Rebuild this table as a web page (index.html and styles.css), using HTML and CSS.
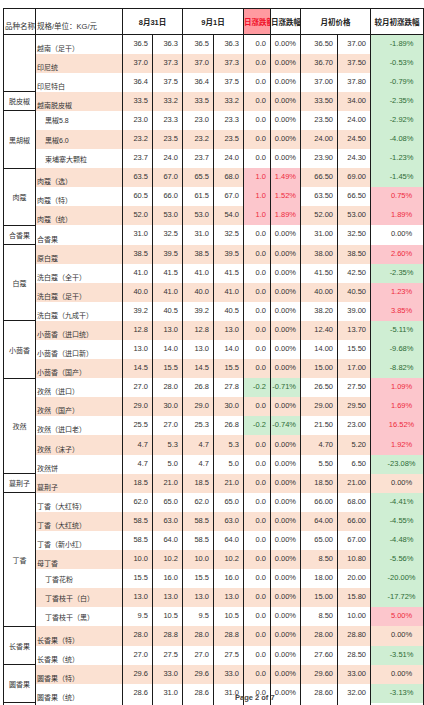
FILE: index.html
```html
<!DOCTYPE html>
<html lang="zh">
<head>
<meta charset="utf-8">
<title>价格表</title>
<link rel="stylesheet" href="styles.css">
</head>
<body>
<div class="page">
<table class="sheet">
<colgroup>
<col class="c1"><col class="c2"><col class="c3"><col class="c4"><col class="c5"><col class="c6"><col class="c7"><col class="c8"><col class="c9"><col class="c10"><col class="c11">
</colgroup>
<thead>
<tr>
<th class="hl">品种名称</th><th class="hl">规格/单位：KG/元</th><th colspan="2">8月31日</th><th colspan="2">9月1日</th><th class="hred">日涨跌额</th><th>日涨跌幅</th><th colspan="2">月初价格</th><th>较月初涨跌幅</th>
</tr>
</thead>
<tbody>
<tr><td class="g" rowspan="3"></td><td class="lab">越南（足干）</td><td>36.5</td><td>36.3</td><td>36.5</td><td>36.3</td><td>0.0</td><td>0.00%</td><td>36.50</td><td>37.00</td><td class="l up">-1.89%</td></tr>
<tr class="p"><td class="lab">印尼统</td><td>37.0</td><td>37.3</td><td>37.0</td><td>37.3</td><td>0.0</td><td>0.00%</td><td>36.70</td><td>37.50</td><td class="l up">-0.53%</td></tr>
<tr><td class="lab">印尼特白</td><td>36.4</td><td>37.5</td><td>36.4</td><td>37.5</td><td>0.0</td><td>0.00%</td><td>37.00</td><td>37.80</td><td class="l up">-0.79%</td></tr>

<tr class="p"><td class="g">脱皮椒</td><td class="lab">越南脱皮椒</td><td>33.5</td><td>33.2</td><td>33.5</td><td>33.2</td><td>0.0</td><td>0.00%</td><td>33.50</td><td>34.00</td><td class="l up">-2.35%</td></tr>

<tr><td class="g" rowspan="3">黑胡椒</td><td class="lab ind">黑椒5.8</td><td>23.0</td><td>23.3</td><td>23.0</td><td>23.3</td><td>0.0</td><td>0.00%</td><td>23.50</td><td>24.00</td><td class="l up">-2.92%</td></tr>
<tr class="p"><td class="lab ind">黑椒6.0</td><td>23.2</td><td>23.5</td><td>23.2</td><td>23.5</td><td>0.0</td><td>0.00%</td><td>24.00</td><td>24.50</td><td class="l up">-4.08%</td></tr>
<tr><td class="lab ind">柬埔寨大颗粒</td><td>23.7</td><td>24.0</td><td>23.7</td><td>24.0</td><td>0.0</td><td>0.00%</td><td>23.90</td><td>24.30</td><td class="l up">-1.23%</td></tr>

<tr class="p"><td class="g" rowspan="3">肉蔻</td><td class="lab">肉蔻（选）</td><td>63.5</td><td>67.0</td><td>65.5</td><td>68.0</td><td class="dn">1.0</td><td class="dn">1.49%</td><td>66.50</td><td>69.00</td><td class="l up">-1.45%</td></tr>
<tr><td class="lab">肉蔻（特）</td><td>60.5</td><td>66.0</td><td>61.5</td><td>67.0</td><td class="dn">1.0</td><td class="dn">1.52%</td><td>63.50</td><td>66.50</td><td class="l dn">0.75%</td></tr>
<tr class="p"><td class="lab">肉蔻（统）</td><td>52.0</td><td>53.0</td><td>53.0</td><td>54.0</td><td class="dn">1.0</td><td class="dn">1.89%</td><td>52.00</td><td>53.00</td><td class="l dn">1.89%</td></tr>

<tr><td class="g">合香果</td><td class="lab">合香果</td><td>31.0</td><td>32.5</td><td>31.0</td><td>32.5</td><td>0.0</td><td>0.00%</td><td>31.00</td><td>32.50</td><td class="l">0.00%</td></tr>

<tr class="p"><td class="g" rowspan="4">白蔻</td><td class="lab">原白蔻</td><td>38.5</td><td>39.5</td><td>38.5</td><td>39.5</td><td>0.0</td><td>0.00%</td><td>38.00</td><td>38.50</td><td class="l dn">2.60%</td></tr>
<tr><td class="lab">洗白蔻（全干）</td><td>41.0</td><td>41.5</td><td>41.0</td><td>41.5</td><td>0.0</td><td>0.00%</td><td>41.50</td><td>42.50</td><td class="l up">-2.35%</td></tr>
<tr class="p"><td class="lab">洗白蔻（足干）</td><td>40.0</td><td>41.0</td><td>40.0</td><td>41.0</td><td>0.0</td><td>0.00%</td><td>40.00</td><td>40.50</td><td class="l dn">1.23%</td></tr>
<tr><td class="lab">洗白蔻（九成干）</td><td>39.2</td><td>40.5</td><td>39.2</td><td>40.5</td><td>0.0</td><td>0.00%</td><td>38.20</td><td>39.00</td><td class="l dn">3.85%</td></tr>

<tr class="p"><td class="g" rowspan="3">小茴香</td><td class="lab">小茴香（进口统）</td><td>12.8</td><td>13.0</td><td>12.8</td><td>13.0</td><td>0.0</td><td>0.00%</td><td>12.40</td><td>13.70</td><td class="l up">-5.11%</td></tr>
<tr><td class="lab">小茴香（进口新）</td><td>13.0</td><td>14.0</td><td>13.0</td><td>14.0</td><td>0.0</td><td>0.00%</td><td>14.00</td><td>15.50</td><td class="l up">-9.68%</td></tr>
<tr class="p"><td class="lab">小茴香（国产）</td><td>14.5</td><td>15.5</td><td>14.5</td><td>15.5</td><td>0.0</td><td>0.00%</td><td>15.00</td><td>17.00</td><td class="l up">-8.82%</td></tr>

<tr><td class="g" rowspan="5">孜然</td><td class="lab">孜然（进口）</td><td>27.0</td><td>28.0</td><td>26.8</td><td>27.8</td><td class="up">-0.2</td><td class="up">-0.71%</td><td>26.50</td><td>27.50</td><td class="l dn">1.09%</td></tr>
<tr class="p"><td class="lab">孜然（国产）</td><td>29.0</td><td>30.0</td><td>29.0</td><td>30.0</td><td>0.0</td><td>0.00%</td><td>29.00</td><td>29.50</td><td class="l dn">1.69%</td></tr>
<tr><td class="lab">孜然（进口老）</td><td>25.5</td><td>27.0</td><td>25.3</td><td>26.8</td><td class="up">-0.2</td><td class="up">-0.74%</td><td>21.50</td><td>23.00</td><td class="l dn">16.52%</td></tr>
<tr class="p"><td class="lab">孜然（沫子）</td><td>4.7</td><td>5.3</td><td>4.7</td><td>5.3</td><td>0.0</td><td>0.00%</td><td>4.70</td><td>5.20</td><td class="l dn">1.92%</td></tr>
<tr><td class="lab">孜然饼</td><td>4.7</td><td>5.0</td><td>4.7</td><td>5.0</td><td>0.0</td><td>0.00%</td><td>5.50</td><td>6.50</td><td class="l up">-23.08%</td></tr>

<tr class="p"><td class="g">蔓荆子</td><td class="lab">蔓荆子</td><td>18.5</td><td>21.0</td><td>18.5</td><td>21.0</td><td>0.0</td><td>0.00%</td><td>18.50</td><td>21.00</td><td class="l">0.00%</td></tr>

<tr><td class="g" rowspan="7">丁香</td><td class="lab">丁香（大红特）</td><td>62.0</td><td>65.0</td><td>62.0</td><td>65.0</td><td>0.0</td><td>0.00%</td><td>66.00</td><td>68.00</td><td class="l up">-4.41%</td></tr>
<tr class="p"><td class="lab">丁香（大红统）</td><td>58.5</td><td>63.0</td><td>58.5</td><td>63.0</td><td>0.0</td><td>0.00%</td><td>64.00</td><td>66.00</td><td class="l up">-4.55%</td></tr>
<tr><td class="lab">丁香（新小红）</td><td>58.5</td><td>64.0</td><td>58.5</td><td>64.0</td><td>0.0</td><td>0.00%</td><td>65.00</td><td>67.00</td><td class="l up">-4.48%</td></tr>
<tr class="p"><td class="lab">母丁香</td><td>10.0</td><td>10.2</td><td>10.0</td><td>10.2</td><td>0.0</td><td>0.00%</td><td>8.50</td><td>10.80</td><td class="l up">-5.56%</td></tr>
<tr><td class="lab ind">丁香花粉</td><td>15.5</td><td>16.0</td><td>15.5</td><td>16.0</td><td>0.0</td><td>0.00%</td><td>18.00</td><td>20.00</td><td class="l up">-20.00%</td></tr>
<tr class="p"><td class="lab ind">丁香枝干（白）</td><td>13.0</td><td>13.0</td><td>13.0</td><td>13.0</td><td>0.0</td><td>0.00%</td><td>15.00</td><td>15.80</td><td class="l up">-17.72%</td></tr>
<tr><td class="lab ind">丁香枝干（黑）</td><td>9.5</td><td>10.5</td><td>9.5</td><td>10.5</td><td>0.0</td><td>0.00%</td><td>8.50</td><td>10.00</td><td class="l dn">5.00%</td></tr>

<tr class="p"><td class="g" rowspan="2">长香果</td><td class="lab">长香果（特）</td><td>28.0</td><td>28.8</td><td>28.0</td><td>28.8</td><td>0.0</td><td>0.00%</td><td>28.00</td><td>28.80</td><td class="l">0.00%</td></tr>
<tr><td class="lab">长香果（统）</td><td>27.0</td><td>27.5</td><td>27.0</td><td>27.5</td><td>0.0</td><td>0.00%</td><td>27.60</td><td>28.50</td><td class="l up">-3.51%</td></tr>

<tr class="p"><td class="g" rowspan="2">圆香果</td><td class="lab">圆香果（特）</td><td>29.6</td><td>33.0</td><td>29.6</td><td>33.0</td><td>0.0</td><td>0.00%</td><td>29.60</td><td>33.00</td><td class="l">0.00%</td></tr>
<tr><td class="lab">圆香果（统）</td><td>28.6</td><td>31.0</td><td>28.6</td><td>31.0</td><td>0.0</td><td>0.00%</td><td>28.60</td><td>32.00</td><td class="l up">-3.13%</td></tr>
<tr class="tail"><td></td><td></td><td></td><td></td><td></td><td></td><td></td><td></td><td></td><td></td><td></td></tr>
</tbody>
</table>
<div class="pager">Page 2 of 7</div>
</div>
</body>
</html>
```
FILE: styles.css
```css
html, body {
  margin: 0;
  padding: 0;
  background: #fff;
}
body {
  width: 424px;
  height: 705px;
  overflow: hidden;
  font-family: "Liberation Sans", "Noto Sans CJK SC", sans-serif;
  color: #333;
}
.page {
  position: relative;
  padding: 8px 0 0 3px;
}
.sheet {
  border-collapse: collapse;
  table-layout: fixed;
  width: 420px;
}
col.c1 { width: 32px; }
col.c2 { width: 87px; }
col.c3 { width: 30px; }
col.c4 { width: 30px; }
col.c5 { width: 31px; }
col.c6 { width: 30px; }
col.c7 { width: 27px; }
col.c8 { width: 30px; }
col.c9 { width: 37px; }
col.c10 { width: 33px; }
col.c11 { width: 53px; }

.sheet th, .sheet td {
  padding: 0;
  white-space: nowrap;
  overflow: hidden;
  border-left: 1px solid #1a1a1a;
  border-right: 1px solid #1a1a1a;
}
.sheet th {
  height: 22px;
  font-size: 7.5px;
  font-weight: bold;
  color: #222;
  text-align: center;
  vertical-align: middle;
  border-top: 1px solid #1a1a1a;
  border-bottom: 1px solid #1a1a1a;
  text-overflow: clip;
}
.sheet th.hl {
  font-weight: normal;
  text-align: left;
  vertical-align: bottom;
  padding-bottom: 3px;
  padding-left: 1px;
  color: #333;
}
.sheet th.hred {
  background: #ff9aa0;
  color: #f0102a;
}
.sheet tbody tr {
  height: 19.1px;
}
.sheet td {
  font-size: 7.5px;
  text-align: right;
  padding-right: 4px;
  padding-bottom: 2px;
  vertical-align: middle;
}
.sheet tr.p td {
  background: #fbe1d2;
}
.sheet tr td.g,
.sheet tr.p td.g {
  background: #fff;
  text-align: center;
  padding: 0;
  font-size: 7px;
  border-top: 1px solid #1a1a1a;
  border-bottom: 1px solid #1a1a1a;
}
.sheet td.lab {
  text-align: left;
  font-size: 7px;
  padding: 0 0 1px 1px;
  vertical-align: bottom;
}
.sheet td.lab.ind {
  padding-left: 9px;
  padding-bottom: 0;
  vertical-align: middle;
}
.sheet td.l {
  text-align: center;
  padding-right: 0;
  padding-left: 9px;
}
.sheet td.up, .sheet tr.p td.up {
  background: #cfeed3;
  color: #2e6b35;
}
.sheet td.dn, .sheet tr.p td.dn {
  background: #fcc6cc;
  color: #ee2b3e;
}
.sheet tr.tail {
  height: 8px;
}
.sheet tr.tail td {
  border-left: 1px dashed #1a1a1a;
  border-right: 1px dashed #1a1a1a;
  background: #fff;
}
.pager {
  position: absolute;
  left: 235px;
  top: 693px;
  font-size: 7.5px;
  font-weight: bold;
  color: #444;
}
```
